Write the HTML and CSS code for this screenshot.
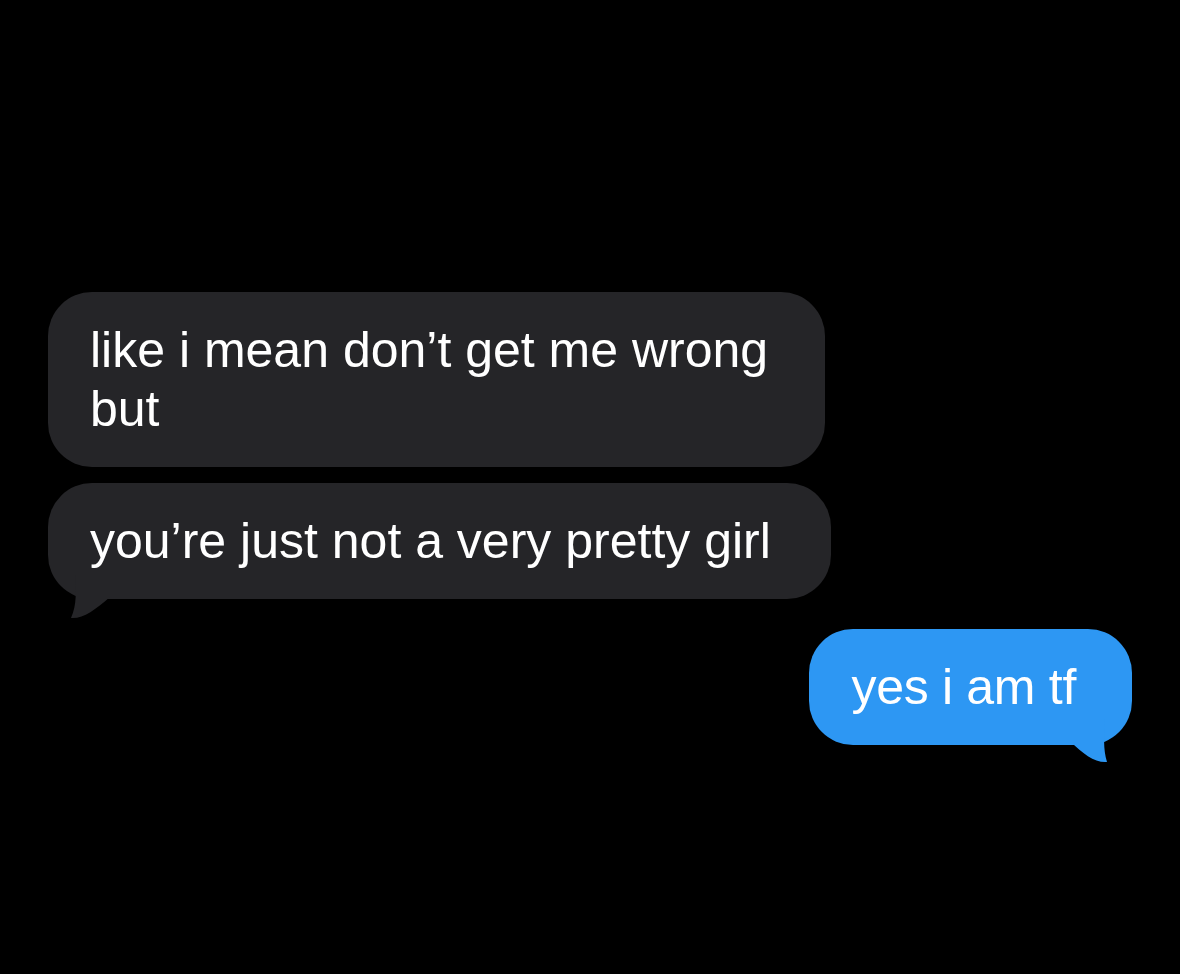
FILE: index.html
```html
<!DOCTYPE html>
<html lang="en">
<head>
  <meta charset="UTF-8">
  <meta name="viewport" content="width=device-width, initial-scale=1.0">
  <title>Messages</title>
  <link rel="stylesheet" href="styles.css">
</head>
<body>
  <div class="thread">

    <!-- incoming -->
    <div class="bubble in">like i mean don’t get me wrong<br>but</div>
    <div class="bubble in last">
      you’re just not a very pretty girl
      <svg class="tail" viewBox="0 0 60 60"><path d="M27 14 C28 30 29 44 23 57 C35 58 47 49 62 36 L62 14 Z"/></svg>
    </div>

    <!-- outgoing -->
    <div class="bubble out last">
      yes i am tf
      <svg class="tail" viewBox="0 0 60 60"><path d="M33 14 C32 30 31 44 35 57 C23 58 11 49 -2 36 L-2 14 Z"/></svg>
    </div>

  </div>
</body>
</html>
```

FILE: styles.css
```css
html, body {
  height: 100%;
}
body {
  margin: 0;
  background: #000;
  font-family: "Liberation Sans", Arial, sans-serif;
  color: #fff;
}
.thread {
  box-sizing: border-box;
  min-height: 100%;
  display: flex;
  flex-direction: column;
  padding: 292px 48px 0;
}
.bubble {
  position: relative;
  width: fit-content;
  font-size: 50px;
  line-height: 59px;
  padding: 29px 57px 28px 42px;
  border-radius: 44px;
  white-space: nowrap;
}
.in {
  background: #252528;
  margin-bottom: 16px;
}
.in.last {
  padding-right: 60px;
  margin-bottom: 30px;
}
.out {
  align-self: flex-end;
  background: #2d97f3;
  padding-right: 56px;
  letter-spacing: -0.3px;
}
.tail {
  position: absolute;
  bottom: -22px;
  width: 60px;
  height: 60px;
  overflow: visible;
}
.in .tail {
  left: 0;
  fill: #252528;
}
.out .tail {
  right: 0;
  bottom: -20px;
  fill: #2d97f3;
}
```
